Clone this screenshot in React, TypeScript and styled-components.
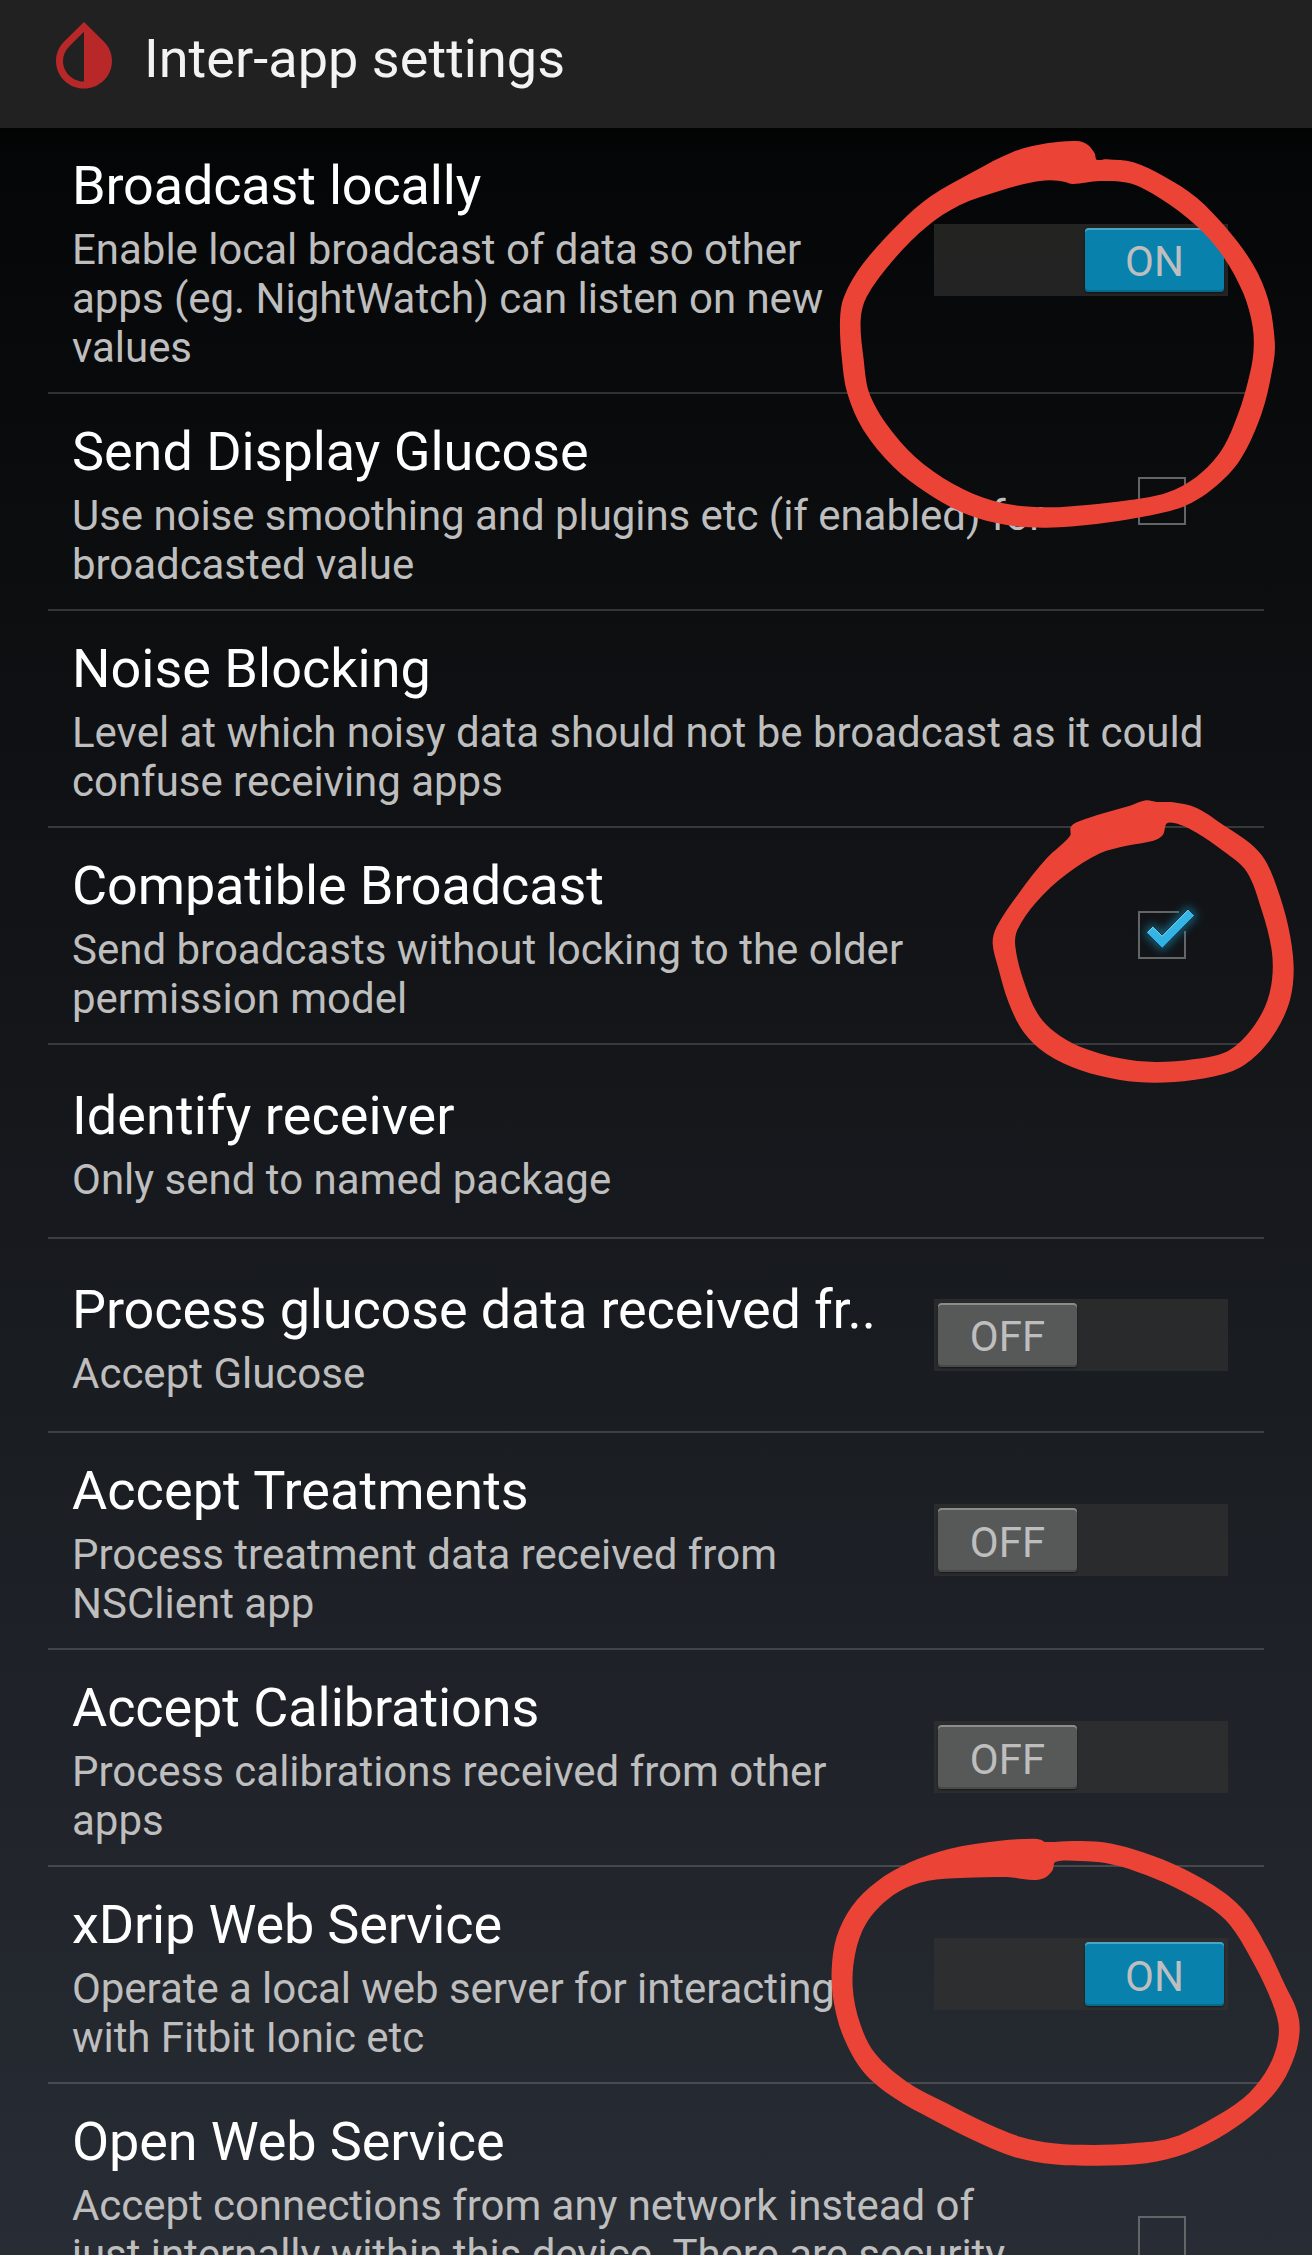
import React from "react";
import styled, { createGlobalStyle, css } from "styled-components";
import { MdInvertColors } from "react-icons/md";

const GlobalStyle = createGlobalStyle`
  body {
    margin: 0;
    background: #282c34;
  }
`;

const Screen = styled.div`
  position: relative;
  display: flex;
  flex-direction: column;
  width: 1312px;
  height: 2255px;
  overflow: hidden;
  font-family: Roboto, "Liberation Sans", sans-serif;
  background: linear-gradient(#020303, #282c34);
`;

const Header = styled.header`
  flex: none;
  display: flex;
  align-items: flex-start;
  box-sizing: border-box;
  height: 128px;
  padding: 14px 42px 0;
  background: #212121;
  box-shadow: 0 2px 10px rgba(0, 0, 0, 0.8);
`;

const HeaderIcon = styled(MdInvertColors)`
  flex: none;
  width: 84px;
  height: 84px;
  margin-top: 1px;
  color: #b92828;
`;

const HeaderTitle = styled.h1`
  margin: 13px 0 0 18px;
  font-size: 54px;
  font-weight: 400;
  line-height: 64px;
  letter-spacing: 0.04px;
  white-space: nowrap;
  color: #f3f3f3;
`;

const List = styled.main`
  flex: none;
  display: flex;
  flex-direction: column;
  padding: 0 48px;
`;

const Row = styled.section<{ $minHeight?: number }>`
  display: flex;
  align-items: center;
  box-sizing: border-box;
  min-height: ${(p) => p.$minHeight ?? 194}px;
  padding: 0 36px 0 24px;
  border-bottom: 2px solid rgba(255, 255, 255, 0.16);
`;

const Texts = styled.div<{ $top?: boolean }>`
  flex: 1;
  display: flex;
  flex-direction: column;
  gap: 7px;
  min-width: 0;
  padding: 26px 0 20px;
  ${(p) =>
    p.$top &&
    css`
      align-self: flex-start;
    `}
`;

const Title = styled.h2<{ $tracking?: number }>`
  margin: 0;
  font-size: 54px;
  font-weight: 400;
  line-height: 64px;
  letter-spacing: ${(p) => p.$tracking ?? 0}px;
  white-space: nowrap;
  color: #fff;
`;

const Summary = styled.p<{ $tracking?: number }>`
  margin: 0;
  font-size: 42px;
  line-height: 49px;
  letter-spacing: ${(p) => p.$tracking ?? 0}px;
  white-space: pre;
  color: #bebebe;
`;

const Track = styled.div<{ $on: boolean }>`
  flex: none;
  display: flex;
  justify-content: ${(p) => (p.$on ? "flex-end" : "flex-start")};
  box-sizing: border-box;
  width: 294px;
  height: 72px;
  margin-bottom: 1px;
  padding: 4px;
  background: rgba(51, 50, 49, 0.65);
`;

const Thumb = styled.div<{ $on: boolean }>`
  box-sizing: border-box;
  width: 139px;
  height: 64px;
  padding-top: 9.5px;
  border-radius: 4px;
  font-size: 42px;
  line-height: 49px;
  text-align: center;
  color: #bebebe;
  background: ${(p) => (p.$on ? "#0882ad" : "#575858")};
  box-shadow:
    inset 0 2px 0 ${(p) => (p.$on ? "#4aa5c6" : "#8b8c8c")},
    inset 0 -2px 0 ${(p) => (p.$on ? "#066a8d" : "#484949")},
    0 1px 2px rgba(0, 0, 0, 0.5);
`;

const Box = styled.div`
  position: relative;
  flex: none;
  box-sizing: border-box;
  width: 48px;
  height: 48px;
  margin: 0 42px 1px 0;
  border: 2px solid #646566;
`;

const CheckedBox = styled(Box)`
  border: none;
`;

const CheckDrawing = styled.svg`
  display: block;
  overflow: visible;
`;

const MarkLayer = styled.svg`
  position: absolute;
  top: 0;
  left: 0;
  pointer-events: none;
`;

type Control = "on" | "off" | "box" | "checked";

interface Setting {
  title: string;
  summary: string;
  control?: Control;
  minHeight?: number;
  titleTracking?: number;
  summaryTracking?: number;
}

const SETTINGS: Setting[] = [
  {
    title: "Broadcast locally",
    titleTracking: -0.17,
    summary:
      "Enable local broadcast of data so other\napps (eg. NightWatch) can listen on new\nvalues",
    summaryTracking: -0.03,
    control: "on",
  },
  {
    title: "Send Display Glucose",
    titleTracking: -0.04,
    summary: "Use noise smoothing and plugins etc (if enabled) for\nbroadcasted value",
    summaryTracking: -0.05,
    control: "box",
  },
  {
    title: "Noise Blocking",
    summary:
      "Level at which noisy data should not be broadcast as it could\nconfuse receiving apps",
    summaryTracking: -0.02,
  },
  {
    title: "Compatible Broadcast",
    titleTracking: -0.14,
    summary: "Send broadcasts without locking to the older\npermission model",
    control: "checked",
  },
  {
    title: "Identify receiver",
    titleTracking: 0.08,
    summary: "Only send to named package",
  },
  {
    title: "Process glucose data received fr..",
    titleTracking: -0.13,
    summary: "Accept Glucose",
    control: "off",
  },
  {
    title: "Accept Treatments",
    titleTracking: 0.06,
    summary: "Process treatment data received from\nNSClient app",
    control: "off",
  },
  {
    title: "Accept Calibrations",
    titleTracking: -0.08,
    summary: "Process calibrations received from other\napps",
    control: "off",
  },
  {
    title: "xDrip Web Service",
    titleTracking: -0.15,
    summary: "Operate a local web server for interacting\nwith Fitbit Ionic etc",
    summaryTracking: -0.06,
    control: "on",
  },
  {
    title: "Open Web Service",
    titleTracking: -0.12,
    summary:
      "Accept connections from any network instead of\njust internally within this device. There are security",
    summaryTracking: -0.05,
    control: "box",
    minHeight: 315,
  },
];

type Point = [number, number];

interface Mark {
  x: number;
  y: number;
  outer: Point[];
  inner: Point[];
}

// Contours are in thirds of a pixel, relative to the mark's own origin.
const MARKS: Mark[] = [
  {
    x: 820,
    y: 120,
    outer: [
      [830, 119], [860, 118], [940, 127], [1030, 168], [1130, 233], [1222, 328],
      [1300, 435], [1345, 540], [1364, 660], [1361, 725], [1325, 880], [1260, 1020],
      [1180, 1105], [1090, 1160], [960, 1192], [830, 1212], [680, 1223], [560, 1215],
      [440, 1183], [320, 1118], [220, 1040], [130, 930], [82, 820], [66, 720],
      [60, 600], [72, 530], [130, 430], [240, 308], [330, 230], [460, 155],
      [580, 95], [680, 70], [770, 63], [803, 74], [824, 100],
    ],
    inner: [
      [735, 186], [758, 192], [840, 183], [930, 190], [1020, 235], [1130, 318],
      [1210, 410], [1270, 520], [1298, 620], [1300, 700], [1285, 780], [1255, 880],
      [1205, 990], [1130, 1070], [1040, 1118], [930, 1140], [800, 1155], [680, 1162],
      [550, 1150], [430, 1108], [310, 1032], [220, 940], [150, 825], [130, 710],
      [122, 600], [140, 530], [220, 420], [320, 320], [420, 255], [540, 212],
      [630, 188], [690, 181],
    ],
  },
  {
    x: 960,
    y: 780,
    outer: [
      [330, 168], [332, 142], [350, 127], [430, 100], [510, 77], [558, 61],
      [590, 66], [640, 67], [710, 84], [800, 142], [870, 190], [915, 240],
      [950, 320], [985, 440], [1001, 560], [990, 660], [950, 750], [890, 825],
      [820, 872], [700, 900], [585, 908], [480, 900], [360, 870], [260, 822],
      [190, 755], [145, 665], [115, 565], [98, 490], [110, 440], [180, 335],
      [260, 235],
    ],
    inner: [
      [621, 130], [660, 134], [710, 158], [790, 213], [860, 275], [905, 390],
      [935, 510], [936, 600], [915, 680], [865, 760], [800, 815], [700, 838],
      [585, 846], [480, 835], [360, 800], [285, 757], [232, 700], [190, 600],
      [166, 500], [172, 450], [230, 365], [320, 282], [420, 220], [500, 197],
      [580, 182], [609, 164],
    ],
  },
  {
    x: 820,
    y: 1820,
    outer: [
      [676, 66], [760, 63], [850, 67], [940, 88], [1060, 132], [1180, 196],
      [1270, 270], [1340, 380], [1395, 495], [1430, 570], [1439, 630], [1425, 705],
      [1385, 790], [1320, 865], [1220, 940], [1100, 1000], [980, 1030], [830, 1037],
      [700, 1033], [580, 1010], [480, 970], [340, 900], [220, 832], [130, 755],
      [70, 650], [42, 550], [35, 450], [50, 350], [95, 260], [170, 185],
      [270, 127], [390, 86], [540, 62], [640, 56], [662, 59],
    ],
    inner: [
      [706, 126], [780, 123], [860, 130], [950, 155], [1060, 200], [1170, 262],
      [1230, 315], [1290, 410], [1345, 520], [1375, 610], [1370, 680], [1335, 760],
      [1270, 835], [1160, 905], [1050, 955], [940, 970], [820, 975], [700, 970],
      [600, 950], [500, 910], [380, 850], [260, 785], [165, 700], [120, 610],
      [98, 500], [108, 390], [145, 300], [220, 225], [300, 188], [400, 175],
      [560, 171], [640, 180], [675, 173], [698, 150],
    ],
  },
];

// Closed Catmull-Rom spline through the points, as cubic segments.
function smoothLoop(points: Point[]): string {
  const n = points.length;
  let d = `M${points[0][0]} ${points[0][1]}`;
  for (let i = 0; i < n; i++) {
    const a = points[(i - 1 + n) % n];
    const b = points[i];
    const c = points[(i + 1) % n];
    const e = points[(i + 2) % n];
    const seg = Math.hypot(c[0] - b[0], c[1] - b[1]);
    const k1 = seg / (seg + Math.hypot(b[0] - a[0], b[1] - a[1])) / 3;
    const k2 = seg / (seg + Math.hypot(e[0] - c[0], e[1] - c[1])) / 3;
    d += `C${b[0] + (c[0] - a[0]) * k1} ${b[1] + (c[1] - a[1]) * k1} ${
      c[0] - (e[0] - b[0]) * k2
    } ${c[1] - (e[1] - b[1]) * k2} ${c[0]} ${c[1]}`;
  }
  return d + "Z";
}

function Switch({ on }: { on: boolean }) {
  return (
    <Track $on={on}>
      <Thumb $on={on}>{on ? "ON" : "OFF"}</Thumb>
    </Track>
  );
}

const CHECK_POINTS = "8.4,21.7 14.8,15.2 24.2,24.2 50.1,-2 56.7,4.6 24.2,37.4";

function Check() {
  return (
    <CheckedBox>
      <CheckDrawing width="48" height="48" viewBox="0 0 48 48">
        <defs>
          <filter id="glow" x="-60%" y="-60%" width="220%" height="220%">
            <feGaussianBlur stdDeviation="5" />
          </filter>
          <linearGradient id="tick" x1="0" y1="0" x2="0.6" y2="1">
            <stop offset="0" stopColor="#5cc6ee" />
            <stop offset="0.5" stopColor="#33b5e5" />
            <stop offset="1" stopColor="#2fb0e4" />
          </linearGradient>
        </defs>
        <path d="M41 1H1V47H47V20" fill="none" stroke="#646566" strokeWidth="2" />
        <polygon
          points={CHECK_POINTS}
          fill="#1b86ad"
          stroke="#1b86ad"
          strokeWidth="4"
          filter="url(#glow)"
          opacity="0.7"
        />
        <polygon points={CHECK_POINTS} fill="url(#tick)" stroke="#0c2430" strokeWidth="1" />
        <path d="M9.4 21.4L14.8 16.1L24.2 25.2L50.1 -1" fill="none" stroke="#7fd2f1" strokeWidth="1" />
      </CheckDrawing>
    </CheckedBox>
  );
}

function Widget({ control }: { control: Control }) {
  if (control === "box") return <Box />;
  if (control === "checked") return <Check />;
  return <Switch on={control === "on"} />;
}

export default function App() {
  return (
    <>
      <GlobalStyle />
      <Screen>
        <Header>
          <HeaderIcon />
          <HeaderTitle>Inter-app settings</HeaderTitle>
        </Header>
        <List>
          {SETTINGS.map((s) => (
            <Row key={s.title} $minHeight={s.minHeight}>
              <Texts $top={!!s.minHeight}>
                <Title $tracking={s.titleTracking}>{s.title}</Title>
                <Summary $tracking={s.summaryTracking}>{s.summary}</Summary>
              </Texts>
              {s.control && <Widget control={s.control} />}
            </Row>
          ))}
        </List>
        <MarkLayer width="1312" height="2255" viewBox="0 0 1312 2255">
          {MARKS.map((m) => (
            <path
              key={m.y}
              transform={`translate(${m.x} ${m.y}) scale(${1 / 3})`}
              d={smoothLoop(m.outer) + smoothLoop(m.inner)}
              fill="#eb4436"
              fillRule="evenodd"
            />
          ))}
        </MarkLayer>
      </Screen>
    </>
  );
}
